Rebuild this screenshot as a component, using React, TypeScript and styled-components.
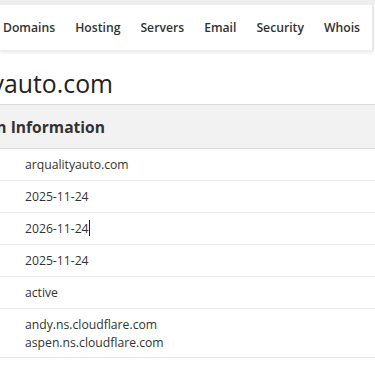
import React from 'react';
import styled, { createGlobalStyle } from 'styled-components';

const GlobalStyle = createGlobalStyle`
  html, body {
    margin: 0;
    padding: 0;
    background: #fff;
    overflow: hidden;
    font-family: "Open Sans", "Liberation Sans", sans-serif;
    color: #333;
  }
`;

const Page = styled.div`
  width: 375px;
  height: 366px;
  display: flex;
  flex-direction: column;
  background: #fff;
`;

const TopStrip = styled.div`
  height: 5px;
  background: #eeeeee;
`;

const NavBar = styled.nav`
  height: 45px;
  display: flex;
  align-items: center;
  background: #fff;
  box-shadow: 0 2px 3px rgba(0, 0, 0, 0.08);
  border-bottom: 1px solid #ececec;
  border-right: 2px solid #e6e6e6;
  margin-right: 1px;
`;

const NavItem = styled.a`
  font-size: 12.2px;
  font-weight: 600;
  color: #333;
  padding: 0 10px;
  text-decoration: none;
  white-space: nowrap;
  &:first-child {
    padding-left: 3px;
  }
`;

const Title = styled.h1`
  margin: 14px 0 0;
  width: 113px;
  display: flex;
  justify-content: flex-end;
  font-size: 24.8px;
  font-weight: 400;
  line-height: 36px;
  color: #222;
  white-space: nowrap;
`;

const Table = styled.div`
  margin-top: 3px;
  border-top: 1px solid #dcdcdc;
`;

const HeaderRow = styled.div`
  height: 43px;
  display: flex;
  align-items: center;
  background: #f2f2f2;
  border-bottom: 1px solid #dcdcdc;
`;

const HeaderText = styled.h2`
  margin: 0;
  width: 105px;
  display: flex;
  justify-content: flex-end;
  font-size: 15.6px;
  font-weight: 700;
  color: #333;
  white-space: nowrap;
`;

const Row = styled.div<{ $tall?: boolean }>`
  min-height: ${p => (p.$tall ? 49 : 32)}px;
  display: flex;
  flex-direction: column;
  justify-content: center;
  padding-left: 25px;
  padding-top: ${p => (p.$tall ? 2 : 1)}px;
  box-sizing: border-box;
  border-bottom: 1px solid #e8e8e8;
`;

const Value = styled.span`
  font-size: 12.2px;
  line-height: 18px;
  color: #333;
`;

const Caret = styled.span`
  display: inline-block;
  width: 1px;
  height: 16px;
  background: #222;
  vertical-align: -3px;
`;

const navItems = ['Domains', 'Hosting', 'Servers', 'Email', 'Security', 'Whois'];

const App: React.FunctionComponent = () => {
  return (
    <Page>
      <GlobalStyle />
      <TopStrip />
      <NavBar>
        {navItems.map(n => (
          <NavItem key={n}>{n}</NavItem>
        ))}
      </NavBar>
      <Title>
        <span>arqualityauto.com</span>
      </Title>
      <Table>
        <HeaderRow>
          <HeaderText>
            <span>Domain Information</span>
          </HeaderText>
        </HeaderRow>
        <Row><Value>arqualityauto.com</Value></Row>
        <Row><Value>2025-11-24</Value></Row>
        <Row><Value>2026-11-24<Caret /></Value></Row>
        <Row><Value>2025-11-24</Value></Row>
        <Row><Value>active</Value></Row>
        <Row $tall>
          <Value>andy.ns.cloudflare.com</Value>
          <Value>aspen.ns.cloudflare.com</Value>
        </Row>
      </Table>
    </Page>
  );
};

export default App;
